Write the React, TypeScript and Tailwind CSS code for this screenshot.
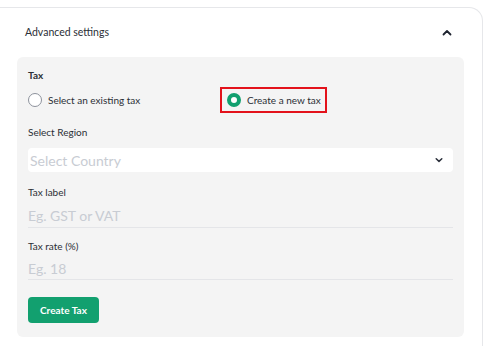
import { useState } from 'react'

function ChevronUp() {
  return (
    <svg width="10" height="7" viewBox="0 0 10 7" fill="none">
      <path d="M1.5 5.5L5 2L8.5 5.5" stroke="#1f2430" strokeWidth="1.8" strokeLinecap="round" strokeLinejoin="round" />
    </svg>
  )
}

function ChevronDown() {
  return (
    <svg width="8" height="6" viewBox="0 0 8 6" fill="none">
      <path d="M1.2 1.8L4 4.4L6.8 1.8" stroke="#2a2f3a" strokeWidth="1.5" strokeLinecap="round" strokeLinejoin="round" />
    </svg>
  )
}

export default function App() {
  const [mode, setMode] = useState<'existing' | 'new'>('new')

  const radio = (on: boolean) =>
    on
      ? 'shrink-0 w-[14px] h-[14px] rounded-full border-[4px] border-[#12a06f] bg-white'
      : 'shrink-0 w-[14px] h-[14px] rounded-full border-[1.5px] border-[#8d929c] bg-white'

  return (
    <div
      className="w-[487px] h-[346px] bg-white overflow-hidden text-[#2b2f36]"
      style={{ fontFamily: 'Lato, "Noto Sans", sans-serif' }}
    >
      {/* カード */}
      <div className="mt-[7px] w-[483px] h-[360px] border-t border-r border-[#e6e7ea] rounded-tr-[14px]">
        {/* ヘッダー */}
        <div className="h-[49px] flex items-center justify-between pl-[25px] pr-[30px]">
          <span className="text-[10.5px] leading-none">Advanced settings</span>
          <ChevronUp />
        </div>

        {/* 設定パネル */}
        <div className="ml-[17px] w-[447px] bg-[#f4f4f4] rounded-[6px] px-[11px] pt-[10px] pb-[14px]">
          <p className="h-[16px] flex items-center text-[10px] font-bold">Tax</p>

          <div className="mt-[4px] h-[26px] flex items-center">
            <button
              onClick={() => setMode('existing')}
              className="flex items-center gap-[6px] w-[192px] text-[10px] whitespace-nowrap"
            >
              <span className={radio(mode === 'existing')} />
              Select an existing tax
            </button>
            <button
              onClick={() => setMode('new')}
              className="h-[26px] w-[107px] flex items-center gap-[6px] pl-[5px] border-2 border-[#e3121b] text-[10px] whitespace-nowrap"
            >
              <span className={radio(mode === 'new')} />
              Create a new tax
            </button>
          </div>

          <p className="mt-[11px] h-[16px] flex items-center text-[10px]">Select Region</p>
          <div className="mt-[8px] h-[24px] bg-white rounded-[4px] flex items-center justify-between pl-[2px] pr-[10px]">
            <span className="text-[14px] text-[#c8ccd3]">Select Country</span>
            <ChevronDown />
          </div>

          <p className="mt-[12px] h-[16px] flex items-center text-[10px]">Tax label</p>
          <input
            placeholder="Eg. GST or VAT"
            className="w-full h-[28px] pt-[4px] bg-transparent border-b border-[#e4e5e8] text-[14px] outline-none placeholder-[#c8ccd3]"
          />

          <p className="mt-[10px] h-[16px] flex items-center text-[10px]">Tax rate (%)</p>
          <input
            placeholder="Eg. 18"
            className="w-full h-[26px] pt-[4px] bg-transparent border-b border-[#e4e5e8] text-[14px] outline-none placeholder-[#c8ccd3]"
          />

          <button className="mt-[17px] h-[26px] px-[12px] rounded-[4px] bg-[#12a06f] text-white text-[10px] font-bold">
            Create Tax
          </button>
        </div>
      </div>
    </div>
  )
}
